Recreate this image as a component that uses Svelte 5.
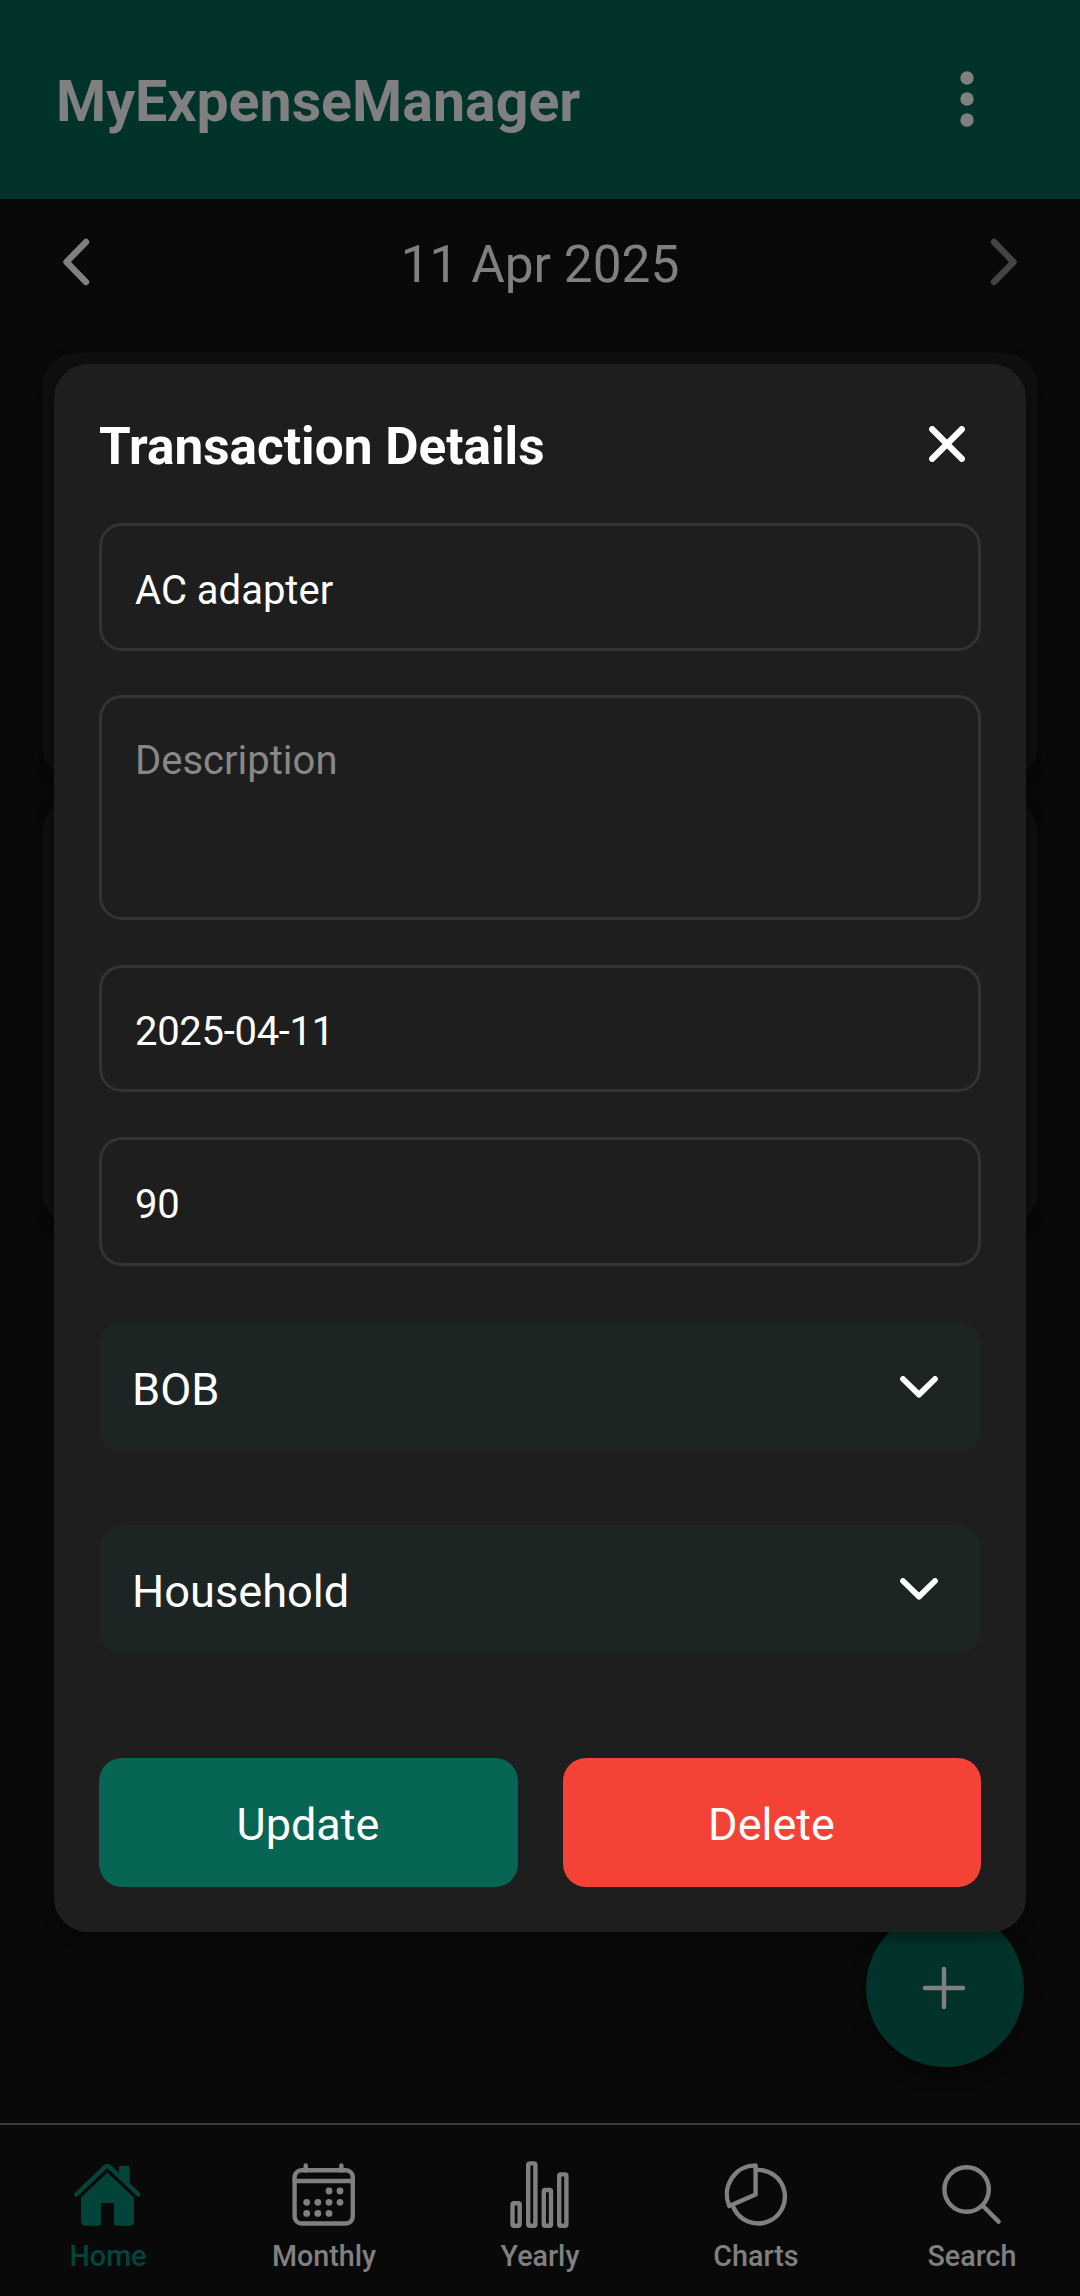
<script>
  let title = $state('AC adapter');
  let description = $state('');
  let date = $state('2025-04-11');
  let amount = $state('90');
  const selects = ['BOB', 'Household'];
  const tabs = ['Home', 'Monthly', 'Yearly', 'Charts', 'Search'];
  const days = [[39, 30], [50, 30], [16.7, 41.3], [27.8, 41.3], [39, 41.3], [50, 41.3], [16.7, 52.4], [27.8, 52.4], [39, 52.4]];
  const bars = [[6.5, 42.3], [22.2, 2.4], [37.8, 29], [53.2, 13.4]];
</script>

<div class="screen">
  <header>
    <h1>MyExpenseManager</h1>
    <svg class="more" width="14" height="58" viewBox="0 0 14 58"><circle cx="7" cy="8" r="6.7" /><circle cx="7" cy="29" r="6.7" /><circle cx="7" cy="50" r="6.7" /></svg>
  </header>

  <div class="date-row">
    <svg width="28" height="48" viewBox="0 0 28 48"><path d="M24 4 4.5 24 24 44" /></svg>
    <span>11 Apr 2025</span>
    <svg class="off" width="28" height="48" viewBox="0 0 28 48"><path d="m4 4 19.5 20L4 44" /></svg>
  </div>

  <main>
    <div class="card"></div>
    <div class="card"></div>
  </main>

  <nav>
    {#each tabs as tab, i}
      <div class="tab" class:active={i === 0}>
        <svg width="68" height="68" viewBox="0 0 68 68">
          {#if i === 0}
            <path class="fill" d="M45 14.5V7q0-2.3 2.3-2.3h6q2.4 0 2.4 2.3v17.3z" />
            <path d="M2.4 33.4 30.9 6.2q2.4-2.2 4.8 0l28.5 27.2" />
            <path class="fill" d="M33.3 11.7 60 36.5V60q0 4.7-4.7 4.7H42q-2 0-2-2V42H27v20.7q0 2-2 2H11.7Q7 64.7 7 60V36.5z" />
          {:else if i === 1}
            <rect x="4.6" y="9.2" width="58.2" height="53.3" rx="7" />
            <path d="M4.6 20h58.2M15.7 4.5v5M51.4 4.5v5" />
            {#each days as [x, y]}<circle class="fill" cx={x} cy={y} r="3.4" />{/each}
          {:else if i === 2}
            {#each bars as [x, y]}<rect {x} {y} width="7.2" height={64.7 - y} rx="1.5" />{/each}
          {:else if i === 3}
            <path d="M34 9a26.8 26.8 0 1 1-22.2 38" />
            <path d="M33.6 4.4v29L7.3 45A28.9 28.9 0 0 1 33.6 4.4z" />
          {:else}
            <circle cx="28.6" cy="28.5" r="22.2" /><path d="m44.5 44.5 16.1 16.1" />
          {/if}
        </svg>
        <span>{tab}</span>
      </div>
    {/each}
  </nav>

  <button class="fab" aria-label="Add"><svg width="44" height="44" viewBox="0 0 44 44"><path d="M22 3v38M3 22h38" /></svg></button>

  <section class="modal">
    <div class="modal-head">
      <h2>Transaction Details</h2>
      <svg width="36" height="36" viewBox="0 0 36 36"><path d="m3.2 3.2 29.6 29.6M32.8 3.2 3.2 32.8" /></svg>
    </div>
    <input class="name" bind:value={title} />
    <textarea placeholder="Description" bind:value={description}></textarea>
    <input class="date" bind:value={date} />
    <input class="amount" bind:value={amount} />
    {#each selects as label}
      <div class="select">
        <span>{label}</span>
        <svg width="38" height="22" viewBox="0 0 38 22"><path d="m3 3 16 15.6L35 3" /></svg>
      </div>
    {/each}
    <div class="actions">
      <button class="update">Update</button>
      <button class="delete">Delete</button>
    </div>
  </section>
</div>

<style>
  :global(body) { margin: 0; background: #090909; }
  .screen { position: relative; display: flex; flex-direction: column; width: 1080px; height: 2296px; overflow: hidden; background: #090909; color: #808080; font-family: Roboto, sans-serif; }
  h1, h2 { margin: 0; font-weight: 700; }
  svg { display: block; flex: none; fill: none; stroke: currentColor; stroke-linecap: round; stroke-linejoin: round; }
  input, textarea, button { box-sizing: border-box; margin: 0; font-family: inherit; outline: none; }
  button { border: 0; display: flex; align-items: center; justify-content: center; }

  header { box-sizing: border-box; display: flex; align-items: center; justify-content: space-between; height: 199px; padding: 5px 106px 0 56px; background: #02332a; }
  h1 { font-size: 57.3px; line-height: 66px; }
  .more { margin-bottom: 6px; fill: currentColor; stroke: none; }

  .date-row { display: flex; align-items: center; justify-content: space-between; height: 126px; padding: 0 62px; margin-bottom: 28px; }
  .date-row span { padding-top: 5px; font-size: 51.4px; line-height: 60px; }
  .date-row svg { stroke-width: 6.4; }
  .off { color: #444; }

  main { flex: 1; display: flex; flex-direction: column; gap: 21px; padding: 0 42px; }
  .card { height: 426px; border-radius: 34px; background: #0f0f0f; box-shadow: 0 4px 12px rgba(0, 0, 0, .45); }

  nav { box-sizing: border-box; display: grid; grid-template-columns: repeat(5, 1fr); height: 173px; padding-top: 36px; border-top: 2px solid #3b3b3b; }
  .tab { display: flex; flex-direction: column; align-items: center; gap: 10px; font-size: 28.7px; font-weight: 500; line-height: 34px; }
  .tab svg { stroke-width: 4.4; }
  .tab svg .fill { fill: currentColor; stroke: none; }
  .active { color: #03443a; }

  .fab { position: absolute; left: 866px; top: 1909px; width: 158px; height: 158px; padding: 0 2px 0 0; border-radius: 50%; background: #02332a; color: #808080; box-shadow: 0 8px 18px rgba(0, 0, 0, .4); }
  .fab svg { stroke-width: 4.4; }

  .modal { position: absolute; left: 54px; top: 364px; box-sizing: border-box; display: flex; flex-direction: column; width: 972px; height: 1568px; padding: 45px; border-radius: 34px; background: #1e1e1e; color: #fff; box-shadow: 0 6px 14px rgba(0, 0, 0, .4); }
  .modal-head { display: flex; align-items: center; justify-content: space-between; height: 70px; margin-bottom: 45px; padding-right: 16px; }
  h2 { padding-top: 7px; font-size: 51.3px; line-height: 60px; }
  .modal-head svg { stroke-width: 6.2; }
  input, textarea { display: block; flex: none; width: 100%; height: 128px; padding: 5px 33px 0; border: 3px solid #333; border-radius: 23px; background: transparent; color: #fff; font-size: 40px; line-height: 46px; }
  .name { padding-top: 7px; }
  textarea { height: 225px; margin: 44px 0 45px; padding: 40px 33px; resize: none; }
  textarea::placeholder { color: #888; opacity: 1; }
  .date { height: 127px; margin-bottom: 45px; letter-spacing: -.3px; }
  .amount { height: 129px; margin-bottom: 57px; letter-spacing: -.3px; }
  .select { box-sizing: border-box; flex: none; display: flex; align-items: center; justify-content: space-between; height: 129px; padding: 0 43.5px 0 33px; margin-bottom: 73px; border-radius: 23px; background: #1c2523; font-size: 45.2px; line-height: 54px; }
  .select span { padding-top: 4px; }
  .select svg { margin-bottom: 1px; stroke-width: 5.8; }
  .actions { display: grid; grid-template-columns: 419px 418px; gap: 45px; margin-top: 31px; }
  .actions button { height: 129px; padding: 4px 1px 0 0; border-radius: 23px; color: #fff; font-size: 45px; line-height: 54px; }
  .update { background: #066653; }
  .delete { background: #f44336; }
</style>
